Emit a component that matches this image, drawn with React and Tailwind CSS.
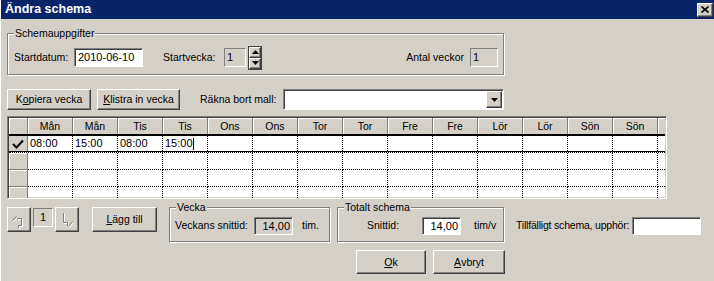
import React from 'react';

const raised = "bg-[#d4d0c8] border border-t-white border-l-white border-r-[#404040] border-b-[#404040] shadow-[inset_-1px_-1px_0_#808080]";
const sunken = "border border-t-[#808080] border-l-[#808080] border-r-white border-b-white shadow-[inset_1px_1px_0_#404040]";
const flat = "border border-t-[#808080] border-l-[#808080] border-r-white border-b-white";

const days = ["Mån", "Mån", "Tis", "Tis", "Ons", "Ons", "Tor", "Tor", "Fre", "Fre", "Lör", "Lör", "Sön", "Sön"];
const firstRow = ["08:00", "15:00", "08:00", "15:00"];

const Group = ({ label, className, children }) => (
  <div className={`relative border border-[#808080] shadow-[inset_1px_1px_0_#fff,1px_1px_0_#fff] ${className}`}>
    <span className="absolute -top-[7px] left-[6px] bg-[#d4d0c8] px-[1px] leading-[12px]">{label}</span>
    {children}
  </div>
);

const Btn = ({ className, children }) => (
  <div className={`${raised} flex items-center justify-center leading-none ${className}`}>{children}</div>
);

const ArrowIcon = ({ d }) => (
  <svg width="22" height="23" viewBox="0 0 22 23" fill="none">
    <path d={d} stroke="#fff" strokeWidth="1" transform="translate(1 1)" />
    <path d={d} stroke="#808080" strokeWidth="1" />
  </svg>
);

const App = () => {
  return (
    <div className="w-[714px] h-[281px] bg-[#d4d0c8] overflow-hidden flex flex-col font-[family-name:Liberation_Sans,Arial,sans-serif] text-[10.5px] text-black border-l border-l-white">
      {/* Title bar */}
      <div className="h-[19px] shrink-0 bg-[#0a246a] flex items-center justify-between pl-[5px] pr-[1px] -ml-[1px]">
        <span className="text-white font-bold text-[12.5px] leading-none">Ändra schema</span>
        <div className={`${raised} w-[16px] h-[14px] flex items-center justify-center`}>
          <svg width="8" height="7" viewBox="0 0 8 7">
            <path d="M0.5 0.5 L7.5 6.5 M7.5 0.5 L0.5 6.5" stroke="#000" strokeWidth="1.6" />
          </svg>
        </div>
      </div>

      <div className="flex flex-col pl-[6px]">
        {/* Schemauppgifter */}
        <Group label="Schemauppgifter" className="mt-[14px] w-[497px] h-[42px] flex items-center pt-[7px] pl-[6px] pr-[5px]">
          <span className="w-[60px]">Startdatum:</span>
          <div className={`${sunken} bg-white w-[69px] h-[19px] flex items-center pl-[3px] text-[11px]`}>2010-06-10</div>
          <span className="ml-[20px] w-[61px]">Startvecka:</span>
          <div className={`${flat} w-[22px] h-[19px] flex items-center pl-[2px] text-[11px]`}>1</div>
          <div className="ml-[2px] w-[14px] h-[24px] flex flex-col border border-[#404040]">
            <div className={`${raised} h-[11px] flex items-center justify-center`}>
              <svg width="7" height="4" viewBox="0 0 7 4"><path d="M3.5 0 L7 4 L0 4 Z" fill="#000" /></svg>
            </div>
            <div className={`${raised} h-[11px] flex items-center justify-center`}>
              <svg width="7" height="4" viewBox="0 0 7 4"><path d="M0 0 L7 0 L3.5 4 Z" fill="#000" /></svg>
            </div>
          </div>
          <div className="flex-1" />
          <span className="mr-[6px]">Antal veckor</span>
          <div className={`${flat} w-[28px] h-[19px] flex items-center pl-[2px] text-[11px]`}>1</div>
        </Group>

        {/* Toolbar row */}
        <div className="mt-[14px] flex items-center h-[21px]">
          <Btn className="w-[84px] h-[21px]">K<u>o</u>piera vecka</Btn>
          <Btn className="ml-[6px] w-[83px] h-[21px]"><u>K</u>listra in vecka</Btn>
          <span className="ml-[20px] w-[83px]">Räkna bort mall:</span>
          <div className={`${sunken} bg-white w-[221px] h-[21px] flex items-center justify-end pr-[1px]`}>
            <div className={`${raised} w-[16px] h-[17px] flex items-center justify-center`}>
              <svg width="7" height="4" viewBox="0 0 7 4"><path d="M0 0 L7 0 L3.5 4 Z" fill="#000" /></svg>
            </div>
          </div>
        </div>

        {/* Grid */}
        <div className="mt-[6px] w-[660px] h-[83px] overflow-hidden bg-white border border-t-[#808080] border-l-[#808080] border-r-white border-b-white shadow-[inset_1px_1px_0_#404040,inset_-1px_-1px_0_#d4d0c8] p-[1px] flex flex-col">
          <div className="flex h-[16px] shrink-0 bg-[#d4d0c8]">
            <div className="w-[19px] shrink-0 border-r border-[#808080] shadow-[inset_1px_1px_0_#fff]" />
            {days.map((d, i) => (
              <div key={i} className="w-[45px] shrink-0 border-r border-[#808080] shadow-[inset_1px_1px_0_#fff] flex items-center justify-center leading-none">{d}</div>
            ))}
            <div className="flex-1 shadow-[inset_1px_1px_0_#fff]" />
          </div>
          <div className="h-[2px] shrink-0 bg-black" />
          <div className="flex h-[15px] shrink-0">
            <div className="w-[19px] shrink-0 bg-[#d4d0c8] border-r border-[#808080] flex items-center justify-center">
              <svg width="12" height="10" viewBox="0 0 12 10"><path d="M1 5 L4.5 8.5 L11 1.5" stroke="#000" strokeWidth="2" fill="none" /></svg>
            </div>
            {days.map((_, i) => (
              <div key={i} className="w-[45px] shrink-0 border-r border-dotted border-black pl-[2px] flex items-center leading-none text-[11px]">
                {firstRow[i]}
                {i === 3 && <span className="w-[1px] h-[12px] bg-black" />}
              </div>
            ))}
            <div className="flex-1" />
          </div>
          <div className="h-[1px] shrink-0 bg-black" />
          <div className="h-[1px] shrink-0 border-t border-dotted border-black" />
          {[0, 1, 2].map((r) => (
            <div key={r} className="flex h-[17px] shrink-0">
              <div className="w-[19px] shrink-0 bg-[#d4d0c8] border-r border-b border-[#808080] shadow-[inset_1px_1px_0_#fff]" />
              {days.map((_, i) => (
                <div key={i} className="w-[45px] shrink-0 border-r border-b border-dotted border-black" />
              ))}
              <div className="flex-1 border-b border-dotted border-black" />
            </div>
          ))}
        </div>

        {/* Bottom row */}
        <div className="mt-[8px] flex items-start">
          <div className={`${raised} w-[24px] h-[25px] flex items-center justify-center`}>
            <ArrowIcon d="M4.5 12.5 L8.5 8.5 M9 10.5 H13.5 V17.5 H10.5 V20" />
          </div>
          <div className={`${flat} ml-[2px] mt-[1px] w-[20px] h-[19px] flex items-center justify-center text-[11px]`}>1</div>
          <div className={`${raised} ml-[2px] w-[24px] h-[25px] flex items-center justify-center`}>
            <ArrowIcon d="M7.5 5 V14.5 H11.5 V18 M12.5 18.5 L16.5 13.5" />
          </div>
          <Btn className="ml-[13px] w-[65px] h-[25px]"><u>L</u>ägg till</Btn>

          <Group label="Vecka" className="ml-[12px] w-[161px] h-[35px] flex items-center pt-[3px] pl-[5px]">
            <span className="w-[79px]">Veckans snittid:</span>
            <div className={`${sunken} w-[39px] h-[18px] flex items-center justify-end pr-[2px] text-[11px]`}>14,00</div>
            <span className="ml-[9px]">tim.</span>
          </Group>

          <Group label="Totalt schema" className="ml-[7px] w-[167px] h-[35px] flex items-center pt-[3px] pl-[29px]">
            <span className="w-[55px]">Snittid:</span>
            <div className={`${sunken} bg-white w-[39px] h-[18px] flex items-center justify-end pr-[2px] text-[11px]`}>14,00</div>
            <span className="ml-[13px]">tim/v</span>
          </Group>

          <div className="ml-[12px] mt-[10px] flex items-center h-[18px]">
            <span className="w-[116px] whitespace-nowrap tracking-[-0.2px]">Tillfälligt schema, upphör:</span>
            <div className={`${sunken} bg-white w-[69px] h-[18px]`} />
          </div>
        </div>

        {/* Dialog buttons */}
        <div className="mt-[8px] flex pl-[349px]">
          <Btn className="w-[70px] h-[24px]"><u>O</u>k</Btn>
          <Btn className="ml-[7px] w-[72px] h-[24px]"><u>A</u>vbryt</Btn>
        </div>
      </div>
    </div>
  );
};

export default App;
